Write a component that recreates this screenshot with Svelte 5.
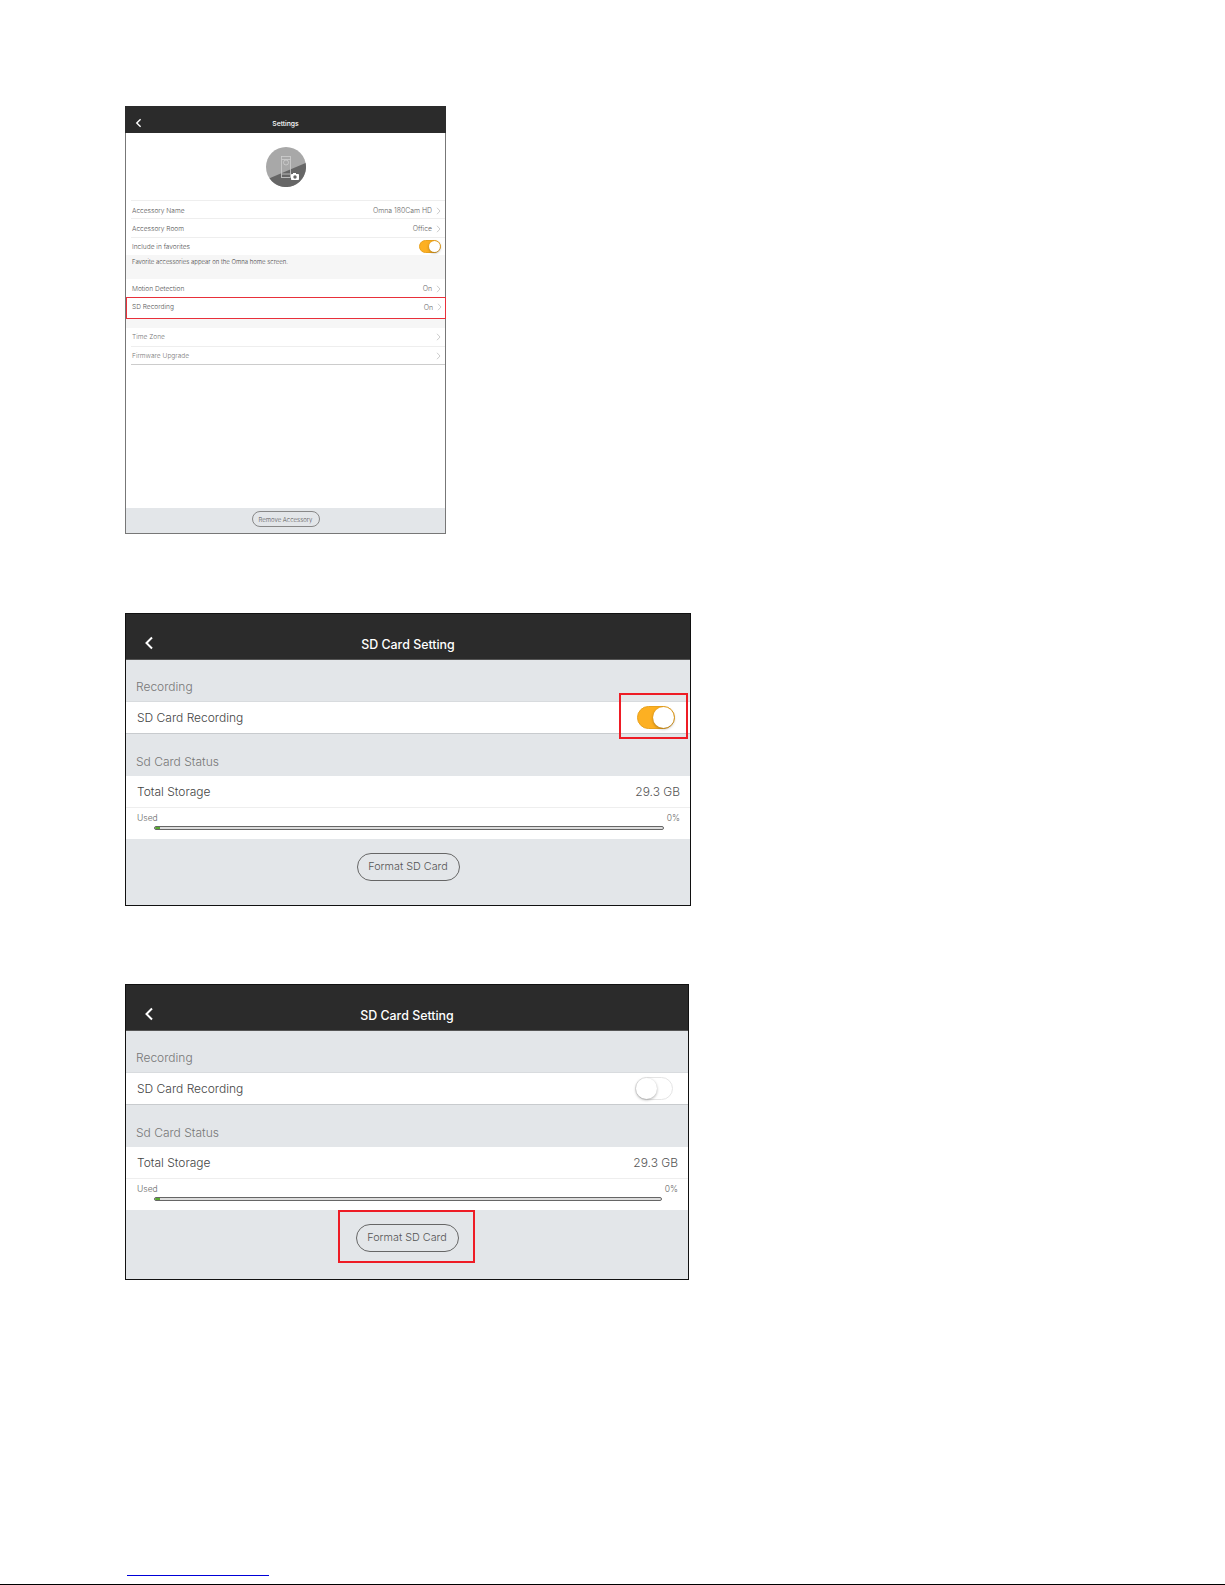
<script lang="ts">
  const listTop = [
    { label: "Accessory Name", value: "Omna 180Cam HD" },
    { label: "Accessory Room", value: "Office" }
  ];
</script>

{#snippet chevron()}
  <svg class="chevron" viewBox="0 0 5 8" aria-hidden="true">
    <path d="M1 .8 4 4 1 7.2" fill="none" stroke="#aaa" stroke-width=".6" />
  </svg>
{/snippet}

{#snippet back(cls)}
  <svg class={cls} viewBox="0 0 10 14" aria-hidden="true">
    <path d="M8 1.500 2.500 7 8 12.500" fill="none" stroke="#fff" stroke-width="2" />
  </svg>
{/snippet}

{#snippet row(label, value, faint = false, chevronOn = true)}
  <div class="row" class:faint>
    <span>{label}</span>
    <span class="value">{value}{#if chevronOn}{@render chevron()}{/if}</span>
  </div>
{/snippet}

{#snippet sdPanel(on)}
  <section class="panel" class:on class:off={!on}>
    <header class="sd-head">
      {@render back("sd-back")}
      <h2>SD Card Setting</h2>
    </header>
    <div class="caption first">Recording</div>
    <div class="sd-row recording">
      <span>SD Card Recording</span>
      <div class="toggle big" class:on></div>
      {#if on}<div class="mark toggle-mark"></div>{/if}
    </div>
    <div class="caption">Sd Card Status</div>
    <div class="status">
      <div class="sd-row storage"><span>Total Storage</span><span class="amount">29.3 GB</span></div>
      <div class="used"><span>Used</span><span>0%</span></div>
      <div class="bar"><div class="fill"></div></div>
    </div>
    <div class="actions">
      <button class="pill big-pill">Format SD Card</button>
      {#if !on}<div class="mark format-mark"></div>{/if}
    </div>
  </section>
{/snippet}

<main class="page">
  <section class="phone">
    <header class="phone-head">
      {@render back("phone-back")}
      <h1>Settings</h1>
    </header>
    <div class="avatar">
      <svg viewBox="0 0 40 40" width="40" height="40" aria-hidden="true">
        <circle cx="20" cy="20" r="20" fill="#a8a8a8" />
        <path d="M3.500 31.300 39.600 16A20 20 0 0 1 3.500 31.300Z" fill="#666" />
        <g fill="none" stroke="#cfcfcf" stroke-width=".8">
          <rect x="15.500" y="9.500" width="9" height="21" />
          <path d="M15.500 12.500h9M15.500 27h9" />
          <circle cx="20" cy="15.500" r="2.500" />
        </g>
        <rect x="25" y="27" width="8" height="6" rx=".8" fill="#fff" />
        <rect x="27" y="26" width="3" height="2" fill="#fff" />
        <circle cx="29" cy="30" r="1.700" fill="#666" />
      </svg>
    </div>
    <div class="list">
      {#each listTop as item}
        {@render row(item.label, item.value)}
      {/each}
      <div class="row fav">
        <span>Include in favorites</span>
        <div class="toggle small on"></div>
      </div>
    </div>
    <div class="note">Favorite accessories appear on the Omna home screen.</div>
    <div class="list plain">
      {@render row("Motion Detection", "On")}
      <div class="highlight">
        {@render row("SD Recording", "On")}
      </div>
    </div>
    <div class="gap"></div>
    <div class="list closed">
      {@render row("Time Zone", "", true)}
      {@render row("Firmware Upgrade", "", true)}
    </div>
    <div class="spacer"></div>
    <footer class="phone-foot">
      <button class="pill small-pill">Remove Accessory</button>
    </footer>
  </section>

  {@render sdPanel(true)}
  {@render sdPanel(false)}

  <div class="foot-link"></div>
  <div class="foot-rule"></div>
</main>

<style>
  :global(body) {
    margin: 0;
    background: #fff;
  }

  .page {
    box-sizing: border-box;
    height: 1585px;
    padding: 106px 0 0 125px;
    display: flex;
    flex-direction: column;
    font-family: Inter, Roboto, "Liberation Sans", sans-serif;
    font-weight: 300;
    color: #444;
    overflow: hidden;
  }

  /* first screenshot */
  .phone {
    box-sizing: border-box;
    width: 321px;
    height: 428px;
    flex: none;
    display: flex;
    flex-direction: column;
    border: 1px solid #777;
    border-top: 0;
    background: #fff;
  }

  .phone-head {
    height: 27px;
    margin: 0 -1px;
    flex: none;
    display: grid;
    grid-template-columns: 1fr auto 1fr;
    align-items: center;
    padding-top: 7px;
    box-sizing: border-box;
    background: #2b2b2b;
  }

  .phone-back {
    width: 7px;
    height: 10px;
    margin: -1px 0 0 10px;
  }

  h1 {
    margin: 0;
    font-size: 6.800px;
    font-weight: 500;
    color: #fff;
  }

  .avatar {
    height: 67px;
    flex: none;
    display: flex;
    justify-content: center;
    padding-top: 14px;
    box-sizing: border-box;
  }

  .list {
    margin-left: 5px;
  }

  .list .row {
    border-top: 1px solid #eee;
  }

  .row {
    box-sizing: border-box;
    height: 18.300px;
    padding: 2px 4px 0 1px;
    display: flex;
    align-items: center;
    justify-content: space-between;
    font-size: 6.600px;
    color: #555;
  }

  .row.faint {
    color: #777;
  }

  .value {
    display: flex;
    align-items: center;
    gap: 4px;
    font-size: 6.900px;
    color: #666;
  }

  .chevron {
    width: 5px;
    height: 8px;
  }

  .fav {
    padding: 1px 4px 0 1px;
  }

  .note {
    height: 24px;
    flex: none;
    box-sizing: border-box;
    padding: 3px 0 0 6px;
    background: #f6f6f6;
    font-size: 6px;
    font-weight: 300;
    color: #444;
  }

  .plain {
    height: 40px;
    position: relative;
  }

  .plain .row {
    border-top: 0;
    padding-top: 1px;
  }

  .highlight {
    height: 22px;
    margin: 0 -1px 0 -5px;
    padding-left: 4px;
    box-sizing: border-box;
    border: 1px solid #e8303a;
  }

  .plain .highlight .row {
    height: 15px;
    padding: 1px 3px 0 1px;
    margin-top: 1px;
  }

  .gap {
    height: 9px;
    flex: none;
    background: #f6f6f6;
  }

  .closed {
    border-bottom: 1px solid #ccc;
  }

  .closed .row {
    padding-top: 0;
  }

  .closed .row:first-child {
    border-top: 0;
  }

  .spacer {
    flex: 1;
  }

  .phone-foot {
    height: 25px;
    flex: none;
    display: flex;
    align-items: center;
    justify-content: center;
    background: #e3e6e9;
  }

  .pill {
    box-sizing: border-box;
    padding: 0;
    background: transparent;
    border: 1px solid #666;
    border-radius: 999px;
    font: inherit;
    color: #555;
  }

  .small-pill {
    width: 68px;
    height: 16px;
    margin-top: -3px;
    font-size: 6px;
    border-color: #888;
  }

  /* SD card screenshots */
  .panel {
    box-sizing: border-box;
    border: 1.500px solid #111;
    background: #e3e6e9;
    flex: none;
  }

  .panel.on {
    width: 566px;
    margin-top: 79px;
  }

  .panel.off {
    width: 564px;
    margin-top: 78px;
  }

  .sd-head {
    box-sizing: border-box;
    height: 46px;
    display: grid;
    grid-template-columns: 1fr auto 1fr;
    align-items: center;
    padding-top: 15px;
    background: #2b2b2b;
    border-bottom: 1px solid #555;
  }

  .sd-back {
    width: 10px;
    height: 14px;
    margin: -2px 0 0 18px;
  }

  h2 {
    margin: 0;
    font-size: 12.400px;
    font-weight: 500;
    color: #fff;
  }

  .caption {
    box-sizing: border-box;
    height: 42px;
    padding: 20px 0 0 10px;
    font-size: 12px;
    line-height: 15px;
    color: #777;
  }

  .caption.first {
    height: 41px;
    padding-top: 19px;
  }

  .sd-row {
    box-sizing: border-box;
    display: flex;
    align-items: center;
    justify-content: space-between;
    padding: 0 10px 1px 11px;
    background: #fff;
    font-size: 12px;
    color: #444;
  }

  .recording {
    position: relative;
    height: 33px;
    border-top: 1px solid #d8dbde;
    border-bottom: 1px solid #c8cbce;
    padding: 0 15px 0 11px;
  }

  .recording span {
    margin-bottom: 1px;
  }

  .status {
    background: #fff;
    height: 63px;
    box-sizing: border-box;
  }

  .storage {
    height: 32px;
    border-bottom: 1px solid #eee;
  }

  .amount {
    color: #555;
  }

  .used {
    display: flex;
    justify-content: space-between;
    padding: 5px 10px 0 11px;
    font-size: 8.500px;
    line-height: 10px;
    color: #666;
  }

  .bar {
    box-sizing: border-box;
    height: 4px;
    margin: 3px 26px 0 28px;
    border: 1px solid #666;
    border-radius: 2px;
    background: #ddd;
    overflow: hidden;
  }

  .fill {
    width: 5px;
    height: 100%;
    background: #58a832;
  }

  .actions {
    position: relative;
    height: 66px;
    box-sizing: border-box;
    padding-top: 14px;
    display: flex;
    justify-content: center;
  }

  .off .actions {
    height: 69px;
  }

  .big-pill {
    width: 103px;
    height: 28px;
    padding-bottom: 1px;
    font-size: 10.800px;
  }

  .toggle {
    position: relative;
    box-sizing: border-box;
    flex: none;
    border-radius: 999px;
    background: #fff;
    border: 1px solid #e5e5e5;
  }

  .toggle.on {
    background: #fdb022;
    border-color: #e9a21e;
  }

  .toggle::after {
    content: "";
    position: absolute;
    top: 0;
    bottom: 0;
    left: 0;
    aspect-ratio: 1;
    border-radius: 50%;
    background: #fff;
    box-shadow: 0 1px 3px #0005;
  }

  .toggle.on::after {
    left: auto;
    right: 0;
  }

  .toggle.big {
    width: 38px;
    height: 23px;
  }

  .toggle.small {
    width: 22px;
    height: 13px;
  }

  .mark {
    position: absolute;
    box-sizing: border-box;
    border: 2px solid #ee1c25;
  }

  .toggle-mark {
    right: 2px;
    top: -9px;
    width: 69px;
    height: 46px;
  }

  .format-mark {
    left: 212px;
    top: 0;
    width: 137px;
    height: 53px;
  }

  .foot-link {
    margin-top: auto;
    margin-left: 2px;
    width: 142px;
    height: 1px;
    flex: none;
    background: #0000d8;
    margin-bottom: 8px;
  }

  .foot-rule {
    height: 1px;
    flex: none;
    margin-left: -125px;
    background: #000;
  }
</style>
